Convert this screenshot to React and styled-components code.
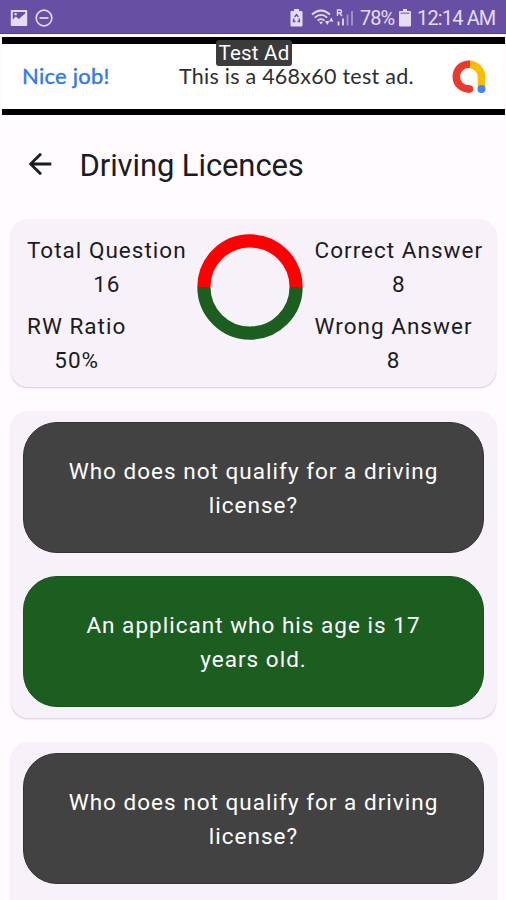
import React from "react";
import styled, { createGlobalStyle } from "styled-components";

const GlobalStyle = createGlobalStyle`
    * {
        box-sizing: border-box;
    }
    body {
        margin: 0;
        background: #fffbff;
        font-family: Roboto, sans-serif;
        overflow: hidden;
    }
`;

const Screen = styled.div`
    width: 506px;
    height: 900px;
    overflow: hidden;
    background: #fffbff;
    color: #1c1b1f;
`;

const StatusBar = styled.header`
    display: flex;
    align-items: center;
    height: 34px;
    padding: 2px 11px 0 10px;
    background: #6750a4;
    border-bottom: 1px solid #563795;
    color: #e3dcf2;
`;

const StatusIcon = styled.svg`
    display: block;
    flex: none;
    margin-left: ${p => p.$gap || 0}px;
`;

const StatusText = styled.span`
    display: inline-block;
    flex: none;
    width: ${p => p.$width}px;
    margin-left: ${p => p.$gap}px;
    padding-top: 1px;
    font-size: 20px;
    line-height: 24px;
    letter-spacing: ${p => p.$spacing}px;
    white-space: nowrap;
`;

const Spacer = styled.div`
    flex: 1;
`;

const AdBanner = styled.section`
    position: relative;
    display: flex;
    align-items: center;
    height: 78px;
    margin: 3px 1px 0 2px;
    padding: 0 19px 0 20px;
    background: #fff;
    border-top: 7px solid #000;
    border-bottom: 6px solid #000;
    font-family: Lato, sans-serif;
`;

const AdTag = styled.span`
    position: absolute;
    top: -4px;
    left: 214px;
    width: 76px;
    height: 26px;
    border-radius: 3px;
    background: #3b3b3b;
    color: #fff;
    font: 20.5px/26px Roboto, sans-serif;
    letter-spacing: 0.2px;
    text-align: center;
    white-space: nowrap;
`;

const AdHeadline = styled.span`
    width: 157px;
    margin-top: -2px;
    color: #3079e8;
    font-size: 22px;
    letter-spacing: 0.25px;
    -webkit-text-stroke: 0.4px #3079e8;
`;

const AdBody = styled.span`
    flex: 1;
    margin-top: -2px;
    color: #2d2e31;
    font-size: 21.5px;
    letter-spacing: 0.25px;
    white-space: nowrap;
`;

const TitleBar = styled.div`
    display: flex;
    align-items: center;
    height: 100px;
    padding: 0 0 2px 23px;
`;

const Title = styled.h1`
    margin: 3px 0 0 22.5px;
    font-size: 31px;
    font-weight: 400;
    line-height: 40px;
    letter-spacing: -0.1px;
`;

const Card = styled.section`
    margin: 0 10px 24px 11px;
    border-radius: 17px;
    background: #f7f2f9;
    box-shadow: 0 1.5px 2px -0.5px rgba(60, 40, 80, 0.22);
`;

const Summary = styled(Card)`
    display: flex;
    height: 168px;
    margin-top: 4px;
    padding: 14px 0 0 16px;
`;

const StatColumn = styled.div`
    display: flex;
    flex-direction: column;
    align-items: flex-start;
    gap: 8.4px;
    width: ${p => p.$width}px;
    padding-top: 1px;
`;

const Stat = styled.div`
    font-size: 22.5px;
    line-height: 33.7px;
    letter-spacing: 1.02px;
    text-align: center;
    white-space: nowrap;
`;

const Ring = styled.svg`
    display: block;
    flex: none;
    margin: 0.5px 12px 0 0;
`;

const Quiz = styled(Card)`
    display: flex;
    flex-direction: column;
    gap: 23px;
    height: 307px;
    padding: 10.5px 12px;
`;

const Bubble = styled.div`
    display: flex;
    align-items: center;
    justify-content: center;
    flex: none;
    height: 131px;
    padding: 3px 40px 0;
    border-radius: 34px;
    background: ${p => (p.$answer ? "#1b5e20" : "#424242")};
    border: 1px solid ${p => (p.$answer ? "#155a19" : "#333")};
    color: #fff;
    font-size: 22.5px;
    line-height: 33.7px;
    letter-spacing: 1.02px;
    text-align: center;
`;

const stats = [
    [
        { label: "Total Question", value: "16" },
        { label: "RW Ratio", value: "50%" },
    ],
    [
        { label: "Correct Answer", value: "8" },
        { label: "Wrong Answer", value: "8" },
    ],
];

const questions = [
    {
        question: "Who does not qualify for a driving license?",
        answer: "An applicant who his age is 17 years old.",
    },
    {
        question: "Who does not qualify for a driving license?",
    },
];

const ImageIcon = () => (
    <StatusIcon width="18" height="18" viewBox="0 0 18 18">
        <path
            fill="currentColor"
            fillRule="evenodd"
            d="M1.500 1h15q.7 0 .7.700v14.600q0 .7-.7.700h-15q-.7 0-.7-.700V1.700q0-.7.700-.700zm1.300 2v7.500l3-3 3 2.500 4-3.500 2.400-2V3zM4.500 4h2.200v2.200H4.500z"
        />
    </StatusIcon>
);

const DndIcon = () => (
    <StatusIcon $gap={7} width="18" height="18" viewBox="0 0 18 18" fill="none" stroke="currentColor" strokeWidth="1.7">
        <circle cx="9" cy="9" r="7.8" />
        <path d="M4.5 9h9" />
    </StatusIcon>
);

const RecycleBatteryIcon = () => (
    <StatusIcon width="13" height="18" viewBox="0 0 13 18">
        <path fill="currentColor" d="M4 0h5v2h2.500q1 0 1 1v13.500q0 1-1 1h-10q-1 0-1-1V3q0-1 1-1H4z" />
        <path
            d="M4.500 8L6.500 5.500L8.500 8M3.800 9.500L3.500 12.500H5.500M9.200 9.500L9.500 12.500H7.500"
            fill="none"
            stroke="#6750a4"
            strokeWidth="1.4"
        />
    </StatusIcon>
);

const WifiIcon = () => (
    <StatusIcon $gap={8} width="24" height="18" viewBox="0 0 24 18" fill="none" stroke="currentColor" strokeWidth="1.8">
        <path d="M1 5.500Q10-2.500 19 5.500M3.800 8.600Q10 3.200 16.200 8.600M6.500 11.600Q10 8.600 13.500 11.600" />
        <path d="M8 12.800h4L10 15.500z" fill="currentColor" stroke="none" />
        <path d="M14 12h4.500l-2.250 4zM18 12.500h4.500l-2.250-4z" fill="currentColor" stroke="none" />
    </StatusIcon>
);

const SignalIcon = () => (
    <StatusIcon $gap={1} width="18" height="20" viewBox="0 0 18 20" fill="none" stroke="currentColor">
        <path d="M1.500 8V2h2.500q1.500 0 1.500 1.500t-1.500 1.500H1.500M3.500 5L6 8" strokeWidth="1.400" />
        <path d="M2.500 17.500v-4M7 17.500V10.500" strokeWidth="1.800" />
        <path d="M11.500 17.500V6.500M16 17.500V3" strokeWidth="1.800" opacity="0.5" />
    </StatusIcon>
);

const BatteryIcon = () => (
    <StatusIcon $gap={6} width="12" height="18" viewBox="0 0 12 18">
        <path fill="currentColor" d="M4 0h4v2h3q1 0 1 1v13.500q0 1-1 1H1q-1 0-1-1V3q0-1 1-1h3z" />
        <path fill="#9382c2" d="M1.500 3.500h9v1.500h-9z" />
    </StatusIcon>
);

const AdLogo = () => (
    <svg width="34" height="34" viewBox="0 0 34 34" fill="none" strokeWidth="7.600">
        <path d="M16.500 4.300A12.800 12.500 0 0 1 29.500 17V28" stroke="#fbbc04" />
        <path d="M18 4.300C9.500 3.800 4.300 10 4.300 16.700S9.500 29 17.500 29" stroke="#ea3a2c" />
        <circle cx="17.500" cy="29" r="3.800" fill="#ea3a2c" />
        <circle cx="29.500" cy="29" r="4" fill="#4285f4" />
    </svg>
);

const BackArrow = () => (
    <svg width="34" height="34" viewBox="0 0 24 24">
        <path fill="#1c1b1f" d="M20 11H7.830l5.590-5.590L12 4l-8 8 8 8 1.410-1.410L7.830 13H20z" />
    </svg>
);

const ResultRing = () => (
    <Ring width="106" height="106" viewBox="0 0 106 106" fill="none" strokeWidth="13.200">
        <path d="M6.900 53a46.100 46.100 0 0 1 92.200 0" stroke="#ff0000" />
        <path d="M6.900 53a46.100 46.100 0 0 0 92.200 0" stroke="#1b5e20" />
    </Ring>
);

const Stats = ({ items, width }) => (
    <StatColumn $width={width}>
        {items.map(item => (
            <Stat key={item.label}>
                {item.label}
                <br />
                {item.value}
            </Stat>
        ))}
    </StatColumn>
);

export default () => (
    <Screen>
        <GlobalStyle />
        <StatusBar>
            <ImageIcon />
            <DndIcon />
            <Spacer />
            <RecycleBatteryIcon />
            <WifiIcon />
            <SignalIcon />
            <StatusText $gap={6} $width={33} $spacing={-1}>
                78%
            </StatusText>
            <BatteryIcon />
            <StatusText $gap={6} $width={78} $spacing={-0.85}>
                12:14 AM
            </StatusText>
        </StatusBar>
        <AdBanner>
            <AdHeadline>Nice job!</AdHeadline>
            <AdBody>This is a 468x60 test ad.</AdBody>
            <AdLogo />
            <AdTag>Test Ad</AdTag>
        </AdBanner>
        <TitleBar>
            <BackArrow />
            <Title>Driving Licences</Title>
        </TitleBar>
        <Summary>
            <Stats items={stats[0]} width={169.5} />
            <ResultRing />
            <Stats items={stats[1]} width={168} />
        </Summary>
        {questions.map((q, i) => (
            <Quiz key={i}>
                <Bubble>{q.question}</Bubble>
                {q.answer && <Bubble $answer>{q.answer}</Bubble>}
            </Quiz>
        ))}
    </Screen>
);
